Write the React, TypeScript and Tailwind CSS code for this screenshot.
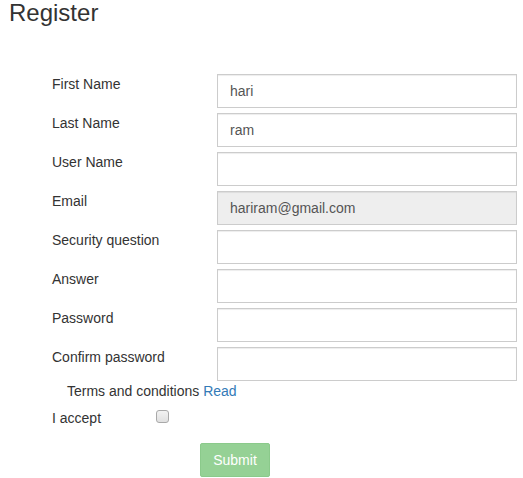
import React from "react";

const rows: { label: string; value?: string; disabled?: boolean }[] = [
  { label: "First Name", value: "hari" },
  { label: "Last Name", value: "ram" },
  { label: "User Name" },
  { label: "Email", value: "hariram@gmail.com", disabled: true },
  { label: "Security question" },
  { label: "Answer" },
  { label: "Password" },
  { label: "Confirm password" },
];

export default function App() {
  return (
    <div className="w-[523px] h-[478px] bg-white font-['Liberation_Sans',Arial,sans-serif] text-[14px] leading-[20px] text-[#333] overflow-hidden">
      <h1 className="pl-[9px] text-[24px] leading-[26.4px] font-normal">Register</h1>
      <div className="mt-[48px] flex flex-col gap-[5px]">
        {rows.map((r) => (
          <div key={r.label} className="flex items-start">
            <label className="w-[217px] pl-[52px] pt-0">{r.label}</label>
            <input
              type="text"
              defaultValue={r.value}
              disabled={r.disabled}
              className={
                "w-[300px] h-[34px] px-[12px] py-[6px] border border-[#ccc] rounded-none text-[14px] leading-[20px] text-[#555] shadow-[inset_0_1px_1px_rgba(0,0,0,0.075)] outline-none " +
                (r.disabled ? "bg-[#eee]" : "bg-white")
              }
            />
          </div>
        ))}
      </div>
      <div className="pl-[67px]">
        Terms and conditions <a className="text-[#337ab7]">Read</a>
      </div>
      <div className="mt-[7px] flex items-start pl-[52px]">
        <span className="w-[104px]">I accept</span>
        <input
          type="checkbox"
          className="appearance-none mt-[2px] w-[13px] h-[13px] border border-[#a9a9a9] rounded-[3px] bg-gradient-to-b from-[#f2f2f2] to-[#e0e0e0]"
        />
      </div>
      <div className="mt-[15px] pl-[200px]">
        <button
          disabled
          className="w-[70px] h-[34px] bg-[#95d195] border border-[#8bca8b] rounded-[2px] text-white text-[14px]"
        >
          Submit
        </button>
      </div>
    </div>
  );
}
